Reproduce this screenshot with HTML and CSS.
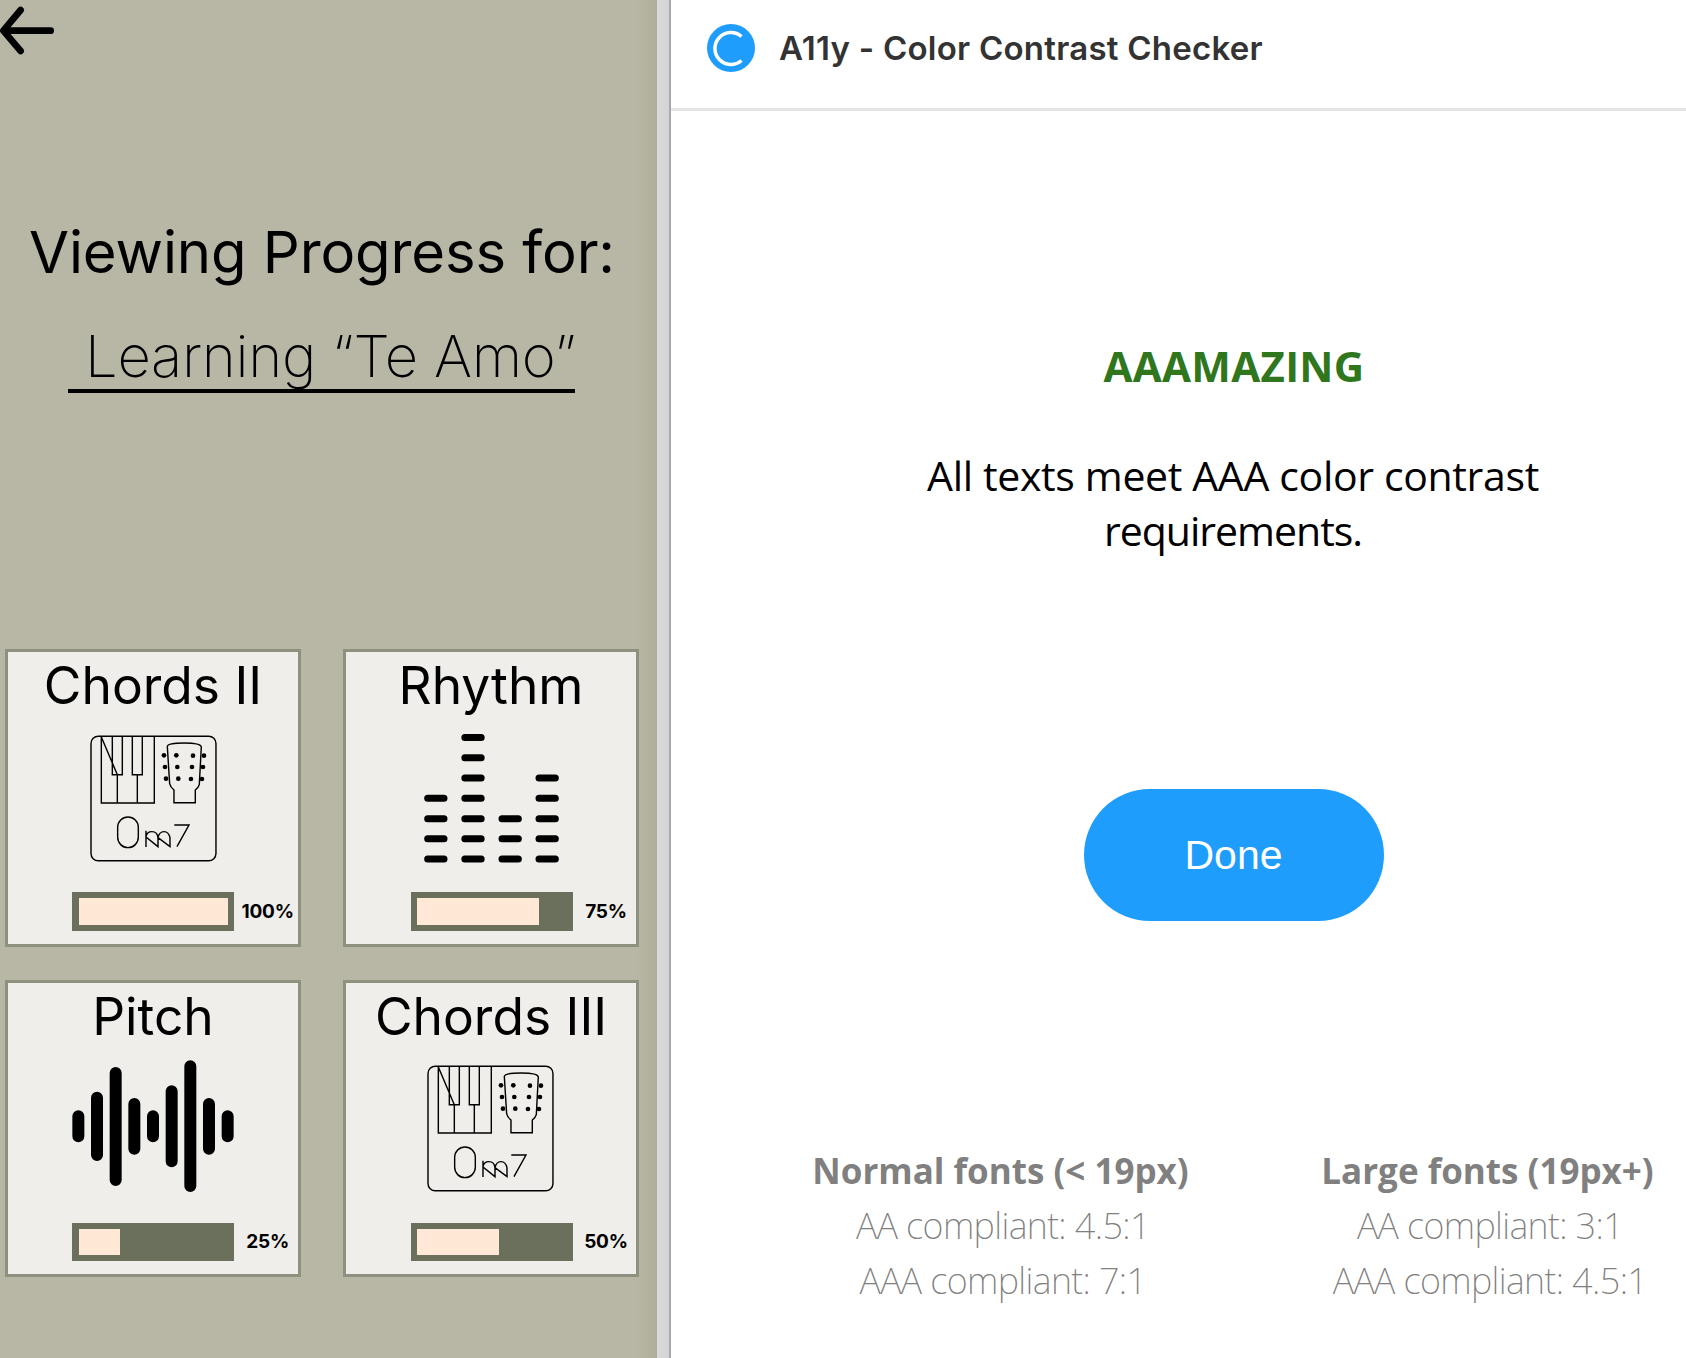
FILE: index.html
```html
<!DOCTYPE html>
<html lang="en">
<head>
<meta charset="utf-8">
<title>A11y - Color Contrast Checker</title>
<link rel="stylesheet" href="styles.css">
</head>
<body>
<svg class="defs" aria-hidden="true">
  <symbol id="chords" viewBox="270 284 382 381">
    <g fill="none" stroke="#000" stroke-width="4.300">
      <rect x="273" y="287.500" width="375" height="374" rx="22"/>
      <path d="M304 288V488H463V288M337 288V403H367V288M397 288V403H427V288M352 403V488M412 403V488M304 290L352 403"/>
      <path d="M502 318Q504 308 553 308T604 320L598 433Q596 441 586 449V487H522V449Q511 440 509 430Z"/>
      <rect x="353" y="530" width="62" height="92" rx="31"/>
      <path d="M438 571V620M438 590Q440 574 456 574T474 592V619L438 590M474 592Q478 574 492 574T510 592V619L474 592"/>
      <path d="M523 554H567L531 619"/>
    </g>
    <g fill="#000">
      <circle cx="492" cy="345" r="7"/><circle cx="529" cy="345" r="7"/><circle cx="579" cy="346" r="7"/><circle cx="612" cy="346" r="7"/>
      <circle cx="495" cy="380" r="7"/><circle cx="532" cy="380" r="7"/><circle cx="576" cy="380" r="7"/><circle cx="609" cy="380" r="7"/>
      <circle cx="498" cy="415" r="7"/><circle cx="535" cy="415" r="7"/><circle cx="573" cy="416" r="7"/><circle cx="606" cy="416" r="7"/>
    </g>
  </symbol>
</svg>
<div class="app">
  <main class="phone">
    <svg class="back" viewBox="0 0 165 165" fill="none" stroke="#000" stroke-width="20" stroke-linecap="round" stroke-linejoin="round"><path d="M152 92H11M62 30L10 92L62 153"/></svg>
    <h1 class="heading">Viewing Progress for:</h1>
    <h2 class="song">Learning “Te Amo”</h2>
    <div class="cards">
      <section class="card">
        <h3>Chords II</h3>
        <div class="art"><svg class="chords"><use href="#chords"/></svg></div>
        <div class="progress"><div class="track"><div class="fill" style="width:149px"></div></div><b>100%</b></div>
      </section>
      <section class="card">
        <h3>Rhythm</h3>
        <div class="art"><svg class="rhythm" viewBox="283 282 405 386" fill="none" stroke="#000" stroke-width="21" stroke-linecap="round"><path d="M294 475h49M294 536h49M294 596.500h49M294 657h49M405.500 292.500h49M405.500 353h49M405.500 414h49M405.500 475h49M405.500 536h49M405.500 596.500h49M405.500 657h49M517 536h49M517 596.500h49M517 657h49M628 414h49M628 475h49M628 536h49M628 596.500h49M628 657h49"/></svg></div>
        <div class="progress"><div class="track"><div class="fill" style="width:122px"></div></div><b>75%</b></div>
      </section>
      <section class="card">
        <h3>Pitch</h3>
        <div class="art"><svg class="pitch" viewBox="217 269 486 397" fill="none" stroke="#000" stroke-width="36" stroke-linecap="round"><path d="M236 438V498M292 382V554M348 308V629M404 401V535M460 438V498M516 363V573M572 288V647M628 401V535M684 438V498"/></svg></div>
        <div class="progress"><div class="track"><div class="fill" style="width:41px"></div></div><b>25%</b></div>
      </section>
      <section class="card">
        <h3>Chords III</h3>
        <div class="art"><svg class="chords chords-left"><use href="#chords"/></svg></div>
        <div class="progress"><div class="track"><div class="fill" style="width:82px"></div></div><b>50%</b></div>
      </section>
    </div>
  </main>
  <div class="divider"></div>
  <aside class="plugin">
    <header class="bar">
      <svg class="logo" viewBox="0 0 48 48"><circle cx="24" cy="24" r="24" fill="#1e9dfc"/><path d="M34.500 12.500A16 16 0 1 0 34.500 36.500" fill="none" stroke="#fff" stroke-width="3.500"/></svg>
      <span class="name">A11y - Color Contrast Checker</span>
    </header>
    <div class="result">
      <strong class="verdict">AAAMAZING</strong>
      <p class="message">All texts meet AAA color contrast<br><span class="last">requirements.</span></p>
      <button class="done">Done</button>
    </div>
    <footer class="levels">
      <div><strong>Normal fonts (&lt; 19px)</strong><p>AA compliant: 4.5:1</p><p>AAA compliant: 7:1</p></div>
      <div><strong>Large fonts (19px+)</strong><p>AA compliant: 3:1</p><p>AAA compliant: 4.5:1</p></div>
    </footer>
  </aside>
</div>
</body>
</html>
```
FILE: styles.css
```css
* { box-sizing: border-box; }
body { margin: 0; background: #fff; font-family: Inter, "Liberation Sans", sans-serif; }
h1, h2, h3, p { margin: 0; font-weight: 400; }
.defs { position: absolute; width: 0; height: 0; }
.app { display: flex; width: 1686px; height: 1358px; overflow: hidden; }

.phone { width: 657px; display: flex; flex-direction: column; color: #000; background: linear-gradient(90deg, #b8b6a4 0, #b8b6a4 636px, #b0ae9b 657px); }
.back { width: 55px; height: 55px; flex: none; }
.heading { margin-top: 162px; width: 644px; text-align: center; font-size: 58px; line-height: 70px; letter-spacing: -0.1px; white-space: nowrap; }
.song { margin: 37px 0 0 68px; width: 507px; height: 69px; padding-left: 17px; border-bottom: 4px solid #000; font-size: 58px; line-height: 65px; letter-spacing: -0.3px; font-weight: 200; white-space: nowrap; }
.cards { display: grid; grid-template-columns: 296px 296px; grid-auto-rows: 297.500px; gap: 33px 42px; margin: 256.200px 0 0 5px; }
.card { display: flex; flex-direction: column; border: 3px solid #8f917f; background: #efeeea; padding-top: 3px; }
.card h3 { font-size: 51.500px; line-height: 61px; text-align: center; white-space: nowrap; }
.art { height: 176px; display: flex; justify-content: center; align-items: flex-end; padding-bottom: 30.500px; }
.chords { width: 127.300px; height: 127px; margin-left: 2px; }
.chords-left { margin-left: -1px; }
.rhythm { width: 135px; height: 128.700px; margin: 0 0 -1px 1px; }
.pitch { width: 162px; height: 132.300px; }
.progress { display: grid; grid-template-columns: 162px 1fr; align-items: center; padding-left: 64.300px; }
.card:nth-child(even) .progress { padding-left: 65px; }
.track { height: 38.500px; padding: 6px 6.500px; background: #6b705c; }
.card:nth-child(even) .track { padding-left: 6px; }
.fill { height: 26.500px; background: #ffe8d6; }
.progress b { font-size: 19px; font-weight: 700; letter-spacing: -0.2px; text-align: center; padding-left: 3px; }

.divider { width: 14px; background: linear-gradient(90deg, #dadada, #d3d3d5 12px, #a9a9ac 12px); }
.plugin { width: 1015px; display: flex; flex-direction: column; background: #fff; }
.bar { height: 111px; border-bottom: 3px solid #e3e3e3; padding: 24px 0 0 36px; display: flex; align-items: flex-start; gap: 24px; }
.logo { width: 48px; height: 48px; }
.name { font-size: 33px; line-height: 48px; font-weight: 600; letter-spacing: 0.25px; color: #333; white-space: nowrap; }
/* wider than the visible pane, so the centred content sits right of its middle */
.result { width: 1126px; height: 1032px; padding-top: 226.700px; display: flex; flex-direction: column; align-items: center; }
.verdict { font: 700 42px/56px "Open Sans", sans-serif; letter-spacing: 0.3px; color: #2f761d; }
.message { margin-top: 54.600px; margin-right: 2px; font: 400 41px/55px "Open Sans", sans-serif; letter-spacing: -0.35px; text-align: center; white-space: nowrap; color: #000; }
.last { letter-spacing: -1px; }
.done { margin-top: 230.700px; width: 300px; height: 132px; border: 0; padding: 1px 1px 0 0; border-radius: 66px; background: #1e9dfc; color: #fff; font: 41px "Liberation Sans", sans-serif; }
.levels { display: grid; grid-template-columns: 487px 487px; margin-left: 86px; text-align: center; color: #808080; font: 35px/55px "Open Sans", sans-serif; white-space: nowrap; }
.levels strong { font-weight: 700; }
.levels p { padding-left: 5px; font-family: "Noto Sans", sans-serif; font-size: 36px; font-weight: 250; letter-spacing: -0.6px; }
```
